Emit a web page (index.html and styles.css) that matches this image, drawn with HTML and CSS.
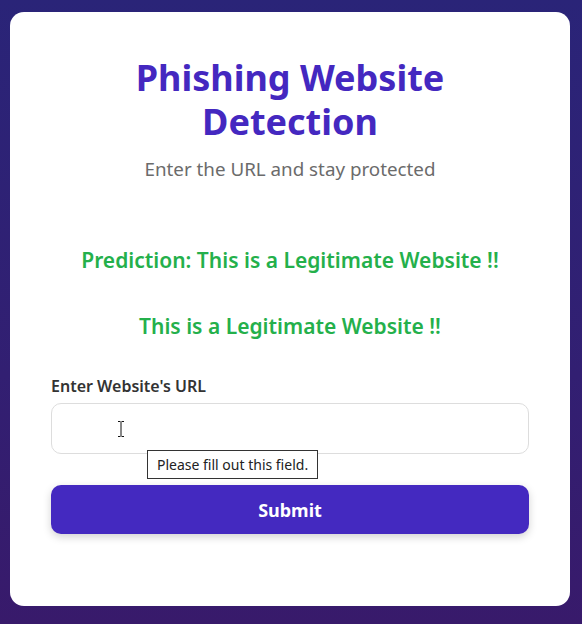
FILE: index.html
```html
<!DOCTYPE html>
<html lang="en">
<head>
<meta charset="utf-8">
<title>Phishing Website Detection</title>
<link rel="stylesheet" href="styles.css">
</head>
<body>
<main class="card">
  <h1 class="title"><span class="title-line">Phishing Website</span><span class="title-line">Detection</span></h1>
  <p class="subtitle">Enter the URL and stay protected</p>
  <p class="result result-first">Prediction: This is a Legitimate Website !!</p>
  <p class="result">This is a Legitimate Website !!</p>
  <form class="form">
    <label class="label" for="url">Enter Website's URL</label>
    <div class="field">
      <input class="input" id="url" type="text">
      <svg class="ibeam" width="8" height="16" viewBox="0 0 8 16" aria-hidden="true">
        <path d="M1 0.5h2.5M4.5 0.5h2.5M4 1v14M1 15.5h2.5M4.5 15.5h2.5" stroke="#111" stroke-width="1" fill="none"/>
      </svg>
      <div class="tooltip">Please fill out this field.</div>
    </div>
    <button class="submit" type="button">Submit</button>
  </form>
</main>
</body>
</html>
```
FILE: styles.css
```css
html, body {
  margin: 0;
  padding: 0;
}
body {
  min-height: 624px;
  background: linear-gradient(180deg, #2a2478 0%, #321f72 60%, #381a6b 100%);
  font-family: "Noto Sans", "Open Sans", sans-serif;
  padding: 12px 12px 18px 10px;
  box-sizing: border-box;
}
.card {
  background: #ffffff;
  border-radius: 14px;
  height: 594px;
  box-sizing: border-box;
  padding: 44px 41px 0 41px;
  display: flex;
  flex-direction: column;
}
.title {
  margin: 0;
  text-align: center;
  color: #4428c0;
  font-size: 36px;
  font-weight: 700;
  display: flex;
  flex-direction: column;
}
.title-line {
  display: block;
  line-height: 44px;
  height: 44px;
}
.subtitle {
  margin: 12px 0 0;
  text-align: center;
  color: #6b6b6b;
  font-size: 18.8px;
  line-height: 26px;
}
.result {
  margin: 39px 0 0;
  text-align: center;
  color: #24b04b;
  font-size: 21px;
  line-height: 27px;
  font-weight: 600;
}
.result-first {
  margin-top: 65px;
}
.form {
  margin-top: 35px;
  display: flex;
  flex-direction: column;
}
.label {
  font-size: 16px;
  font-weight: 600;
  color: #333333;
  line-height: 22px;
}
.field {
  position: relative;
  margin-top: 6px;
}
.input {
  display: block;
  width: 100%;
  box-sizing: border-box;
  height: 51px;
  border: 1px solid #dddddd;
  border-radius: 10px;
  background: #ffffff;
  outline: none;
  font: inherit;
}
.ibeam {
  position: absolute;
  left: 66px;
  top: 18px;
}
.tooltip {
  position: absolute;
  left: 96px;
  top: 47px;
  border: 1px solid #333333;
  background: #ffffff;
  color: #222222;
  font-size: 14px;
  line-height: 19px;
  padding: 4px 9px;
  white-space: nowrap;
}
.submit {
  margin-top: 31px;
  height: 49px;
  border: none;
  border-radius: 10px;
  background: #4429c0;
  color: #ffffff;
  font: inherit;
  font-size: 18px;
  font-weight: 700;
  box-shadow: 0 3px 8px rgba(0, 0, 0, 0.18);
}
```
